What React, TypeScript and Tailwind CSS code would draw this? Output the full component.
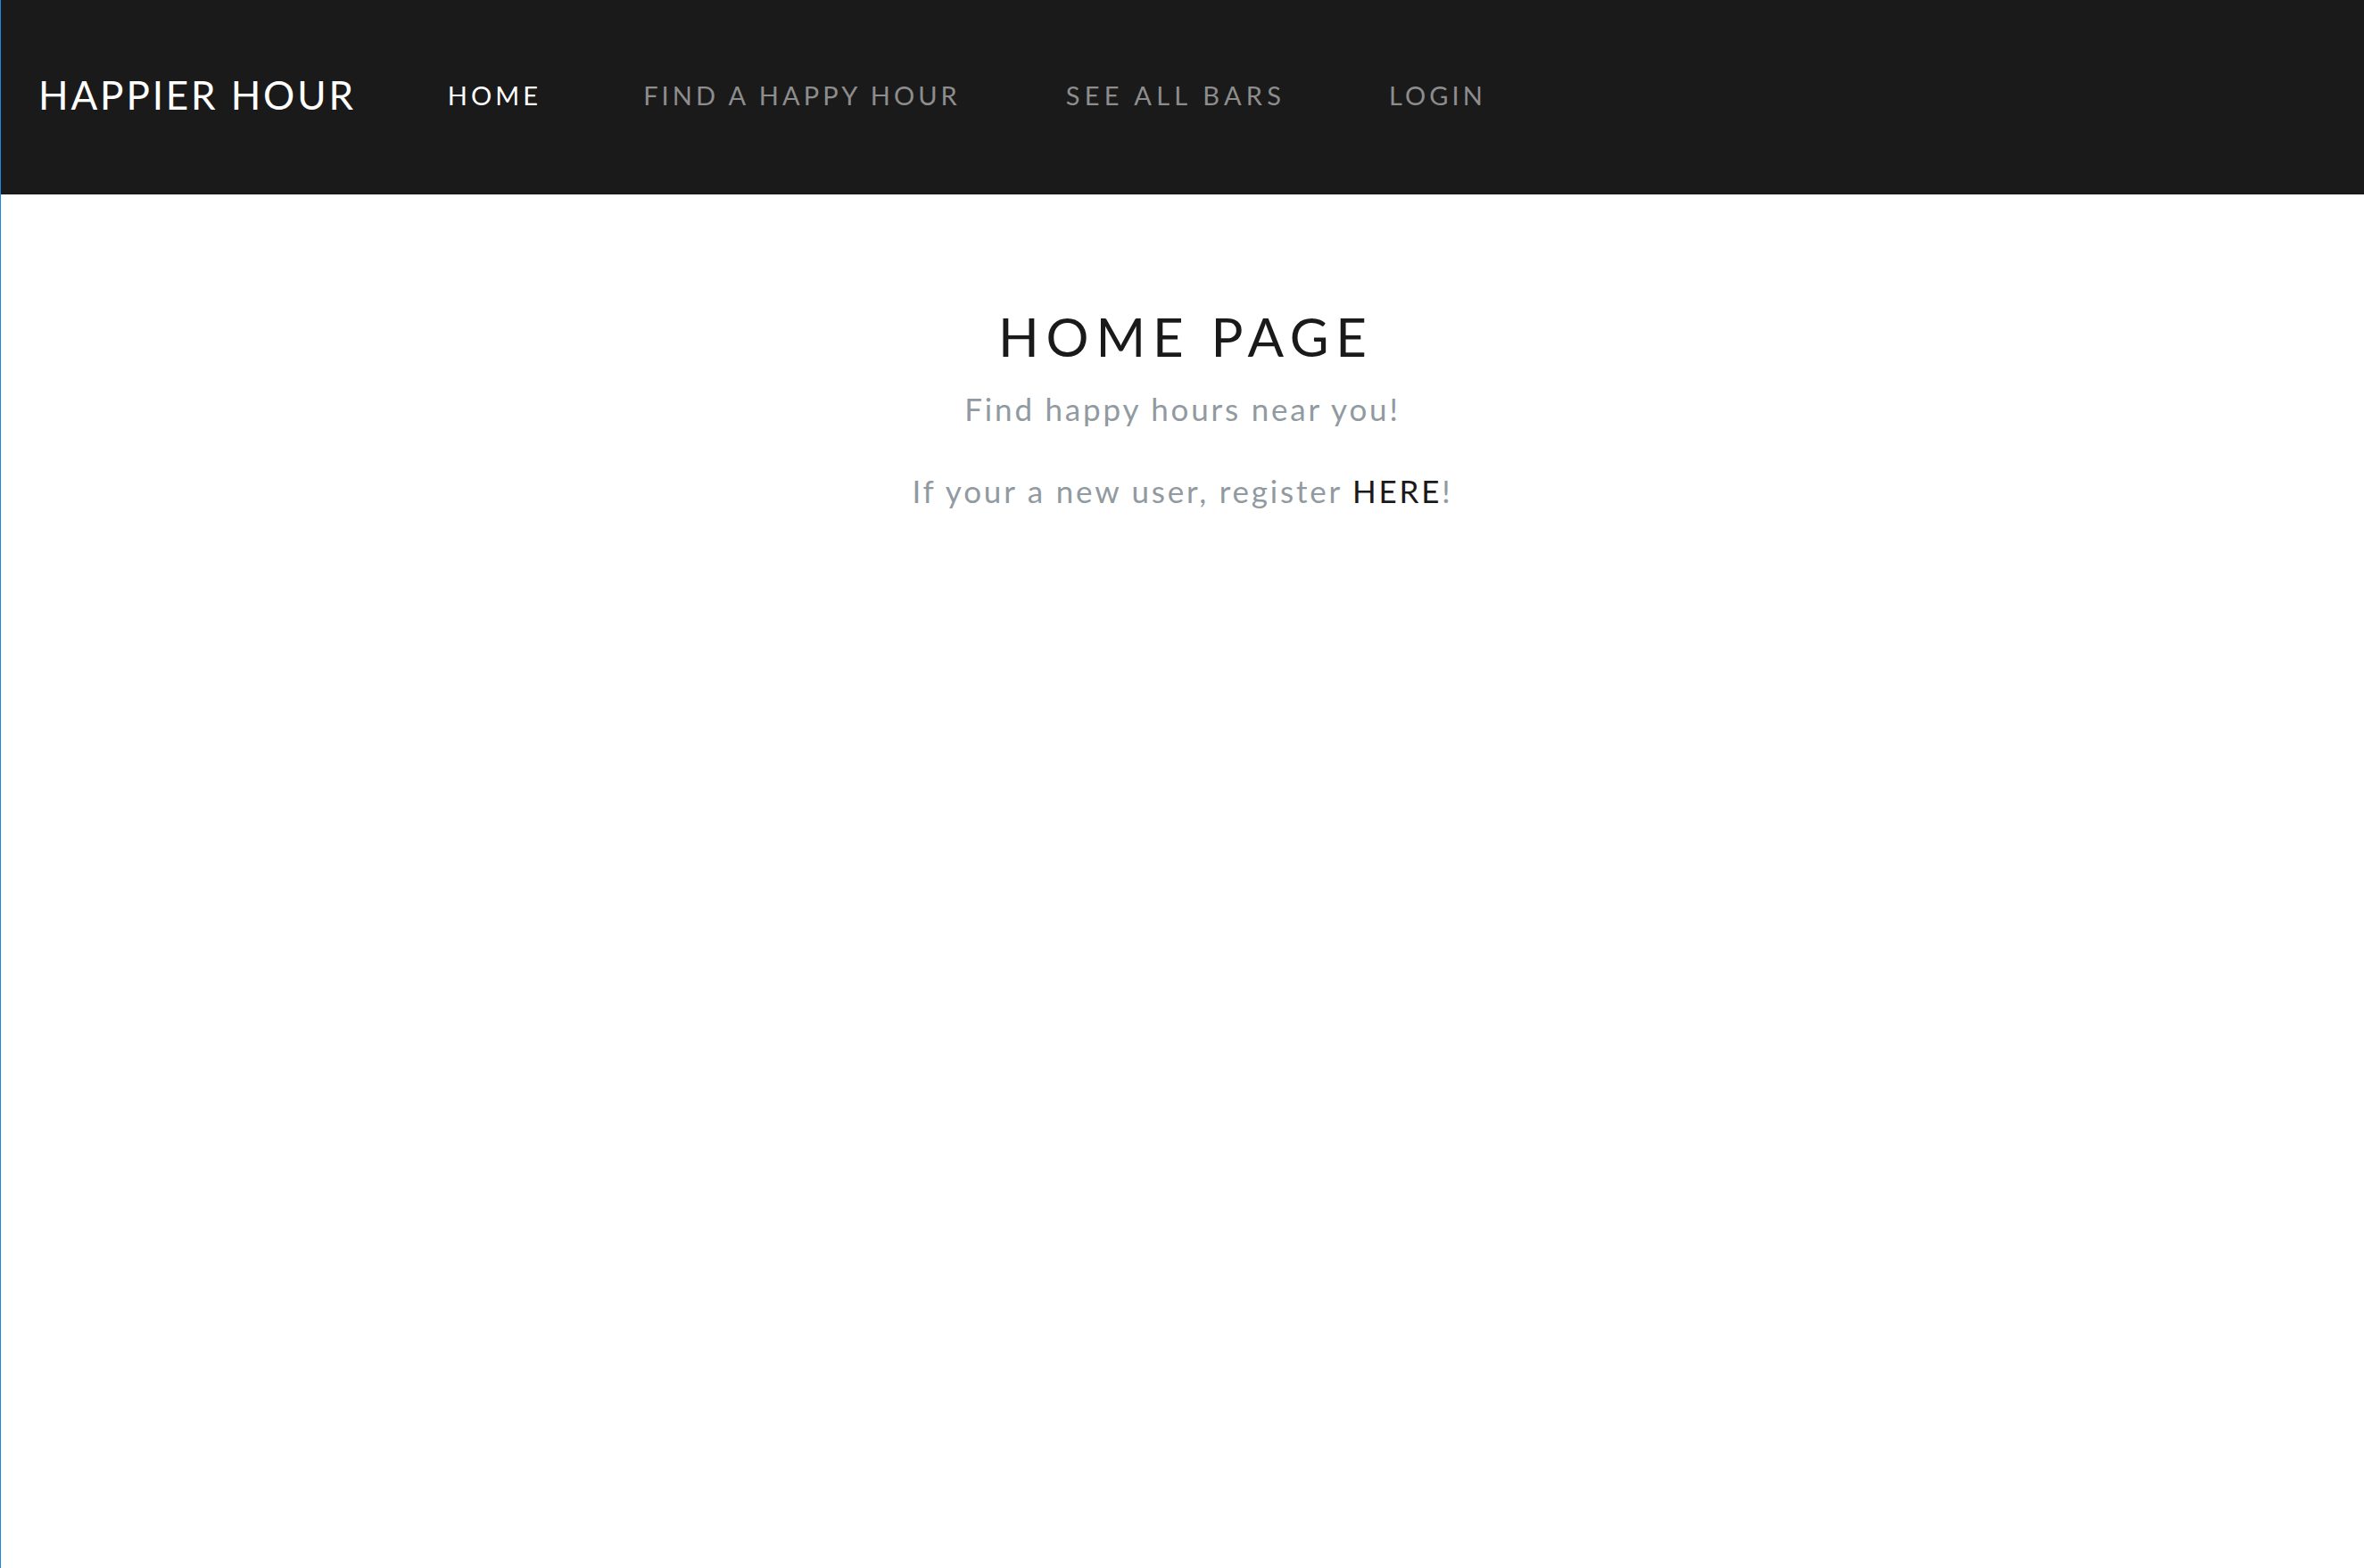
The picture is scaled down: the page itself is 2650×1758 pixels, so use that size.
import React from "react";

export default function App() {
  const font = { fontFamily: "Lato, 'Open Sans', sans-serif" };
  return (
    <div className="min-h-screen w-full bg-white border-l border-[#1e88e5]" style={font}>
      <nav className="h-[218px] bg-[#1a1a1a] flex items-center pl-[42px] pb-[6px]">
        <a className="text-[44px] leading-none text-white tracking-[0.065em] mr-[103px]" href="#">
          HAPPIER HOUR
        </a>
        <div className="flex items-center text-[29px] leading-none tracking-[0.14em]">
          <a className="text-white" href="#">HOME</a>
          <a className="ml-[114px] text-[#8d8d8d]" href="#">FIND A HAPPY HOUR</a>
          <a className="ml-[118px] text-[#8d8d8d] tracking-[0.18em]" href="#">SEE ALL BARS</a>
          <a className="ml-[116px] text-[#8d8d8d]" href="#">LOGIN</a>
        </div>
      </nav>
      <main className="flex flex-col items-center pt-[123px]">
        <h1 className="text-[60px] leading-[72px] text-[#1a1a1a] tracking-[0.13em] pl-[0.13em]">HOME PAGE</h1>
        <p className="mt-[20px] text-[35px] leading-[50px] text-[#919aa1] tracking-[0.08em]">
          Find happy hours near you!
        </p>
        <p className="mt-[42px] text-[35px] leading-[50px] text-[#919aa1] tracking-[0.08em]">
          If your a new user, register <a className="text-[#1a1a1a]" href="#">HERE</a>!
        </p>
      </main>
    </div>
  );
}
